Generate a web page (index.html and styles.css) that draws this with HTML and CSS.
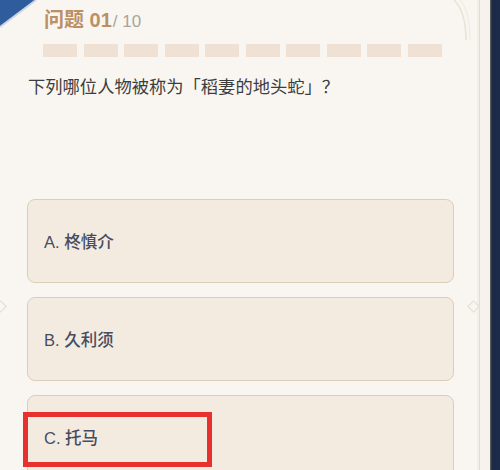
FILE: index.html
```html
<!DOCTYPE html>
<html lang="zh-CN">
<head>
    <meta charset="UTF-8" />
    <title>问题 01</title>
    <link rel="stylesheet" href="styles.css">
</head>
<body>

<div class="frame">
    <div class="panel">
        <!-- 左上角蓝色装饰 -->
        <svg class="corner" width="40" height="30" viewBox="0 0 40 30">
            <polygon points="0,0 36,0 0,27" fill="#2f5c9c" />
            <line x1="36" y1="0" x2="0" y2="27" stroke="#c9d3e3" stroke-width="2" />
        </svg>
        <svg class="corner-right" width="24" height="40" viewBox="0 0 24 40">
            <path d="M2 0 Q14 12 14 40" fill="none" stroke="#e8e2d6" stroke-width="1.5" />
            <path d="M8 0 Q18 10 18 40" fill="none" stroke="#efe9df" stroke-width="1" />
        </svg>
        <span class="gem gem-left"></span>
        <span class="gem gem-right"></span>

        <div class="title">
            <span class="title-num">问题 01</span><span class="title-total">/ 10</span>
        </div>

        <div class="progress">
            <span></span><span></span><span></span><span></span><span></span>
            <span></span><span></span><span></span><span></span><span></span>
        </div>

        <div class="question">下列哪位人物被称为「稻妻的地头蛇」？</div>

        <div class="options">
            <div class="option">A. 柊慎介</div>
            <div class="option">B. 久利须</div>
            <div class="option">C. 托马</div>
        </div>

        <!-- 红框标注 -->
        <div class="mark"></div>
    </div>
    <div class="edge"></div>
</div>

</body>
</html>
```

FILE: styles.css
```css
body, html {
    margin: 0;
    height: 100%;
    overflow: hidden;
    background-color: #f9f6f1;
    font-family: "Liberation Sans", "Noto Sans CJK SC", sans-serif;
}

.frame {
    display: flex;
    width: 500px;
    height: 470px;
}

.panel {
    position: relative;
    flex: 1;
    padding-top: 6px;
    background-color: #f9f6f1;
    box-shadow: inset -10px 0 0 #f7f3ec, inset -11px 0 0 #e4ddd1, inset -13px 0 0 #f4efe6;
}

.edge {
    width: 10px;
    background: linear-gradient(to right, #6d6a63 0, #1c2a47 2px, #1b2b4a 100%);
}

.corner {
    position: absolute;
    left: 0;
    top: 0;
}

.corner-right {
    position: absolute;
    right: 14px;
    top: 0;
}

.gem {
    position: absolute;
    top: 302px;
    width: 7px;
    height: 7px;
    border: 1px solid #e2dbcf;
    transform: rotate(45deg);
    background-color: #f9f6f1;
}

.gem-left {
    left: -4px;
}

.gem-right {
    right: 12px;
}

.title {
    margin-left: 44px;
    line-height: 28px;
}

.title-num {
    font-size: 20px;
    font-weight: bold;
    color: #bb9064;
}

.title-total {
    margin-left: 1px;
    font-size: 17px;
    color: #aaa49c;
}

.progress {
    display: flex;
    gap: 6.5px;
    margin: 8px 0 0 43px;
}

.progress span {
    width: 34px;
    height: 13px;
    background-color: #efe2d5;
}

.question {
    margin: 17px 0 0 28px;
    font-size: 17.3px;
    line-height: 26px;
    color: #3d3d3d;
}

.options {
    display: flex;
    flex-direction: column;
    gap: 14px;
    margin: 99px 0 0 27px;
    width: 427px;
}

.option {
    box-sizing: border-box;
    height: 84px;
    padding-left: 16px;
    display: flex;
    align-items: center;
    background-color: #f3ebe0;
    border: 1px solid #dccdba;
    border-radius: 8px;
    font-size: 16.5px;
    font-weight: 500;
    color: #474c5e;
}

.mark {
    position: absolute;
    left: 23px;
    top: 412px;
    width: 179px;
    height: 45px;
    border: 5px solid #e8302e;
}
```
